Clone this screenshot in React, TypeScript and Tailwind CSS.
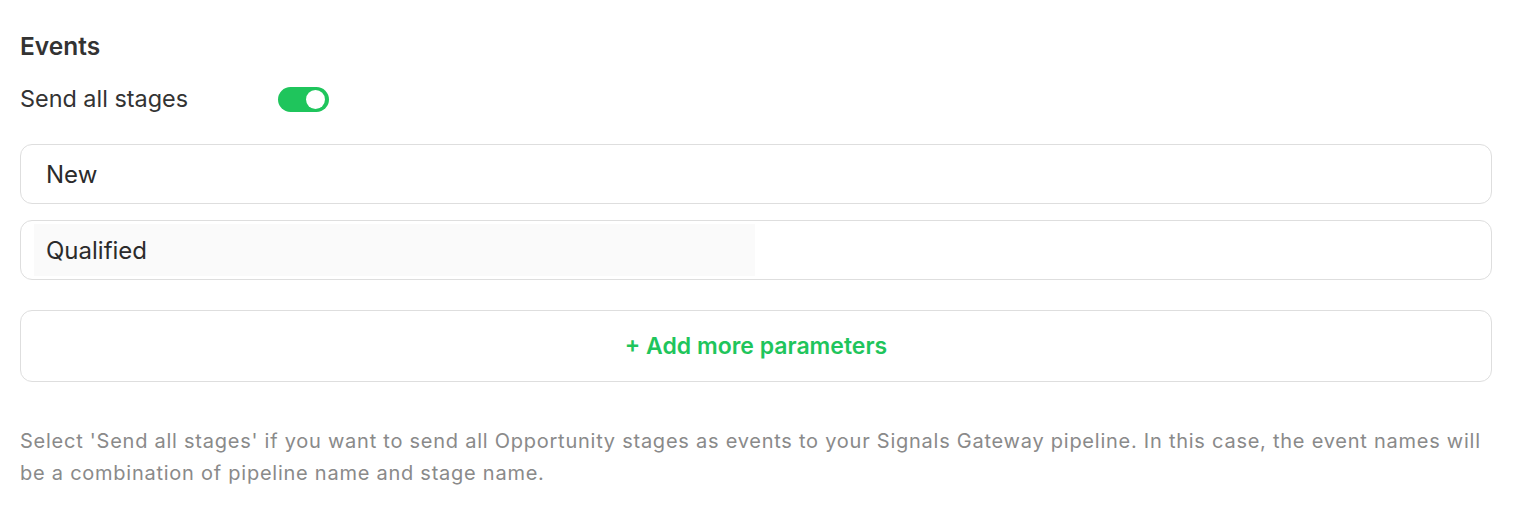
export default function App() {
  return (
    <div
      className="min-h-screen bg-white pl-5 pr-[44px] pt-[30px]"
      style={{ fontFamily: "Inter, 'Noto Sans', 'Liberation Sans', sans-serif" }}
    >
      <h2 className="text-[24.5px] font-semibold leading-8 text-[#333]">Events</h2>

      <div className="mt-6 flex h-[26px] items-center">
        <span className="w-[258px] text-[23.4px] text-[#333]">Send all stages</span>
        <button
          type="button"
          aria-pressed="true"
          className="flex h-[25px] w-[51px] items-center justify-end rounded-full bg-[#1fc55c] pr-[4px]"
        >
          <span className="h-[19px] w-[19px] rounded-full bg-white" />
        </button>
      </div>

      <div className="mt-8 flex h-[60px] items-center rounded-xl border border-[#dedede] pl-[25px] pt-[2px] text-[24px] text-[#2b2b2b]">
        New
      </div>

      <div className="mt-4 flex h-[60px] items-center rounded-xl border border-[#dedede] py-[3px] pl-[13px]">
        <div className="flex h-[52px] w-[721px] items-center bg-[#fafafa] px-3 pt-[2px] text-[24px] text-[#2b2b2b]">
          Qualified
        </div>
      </div>

      <button
        type="button"
        className="mt-[30px] flex h-[72px] w-full items-center justify-center rounded-xl border border-[#dedede] text-[23px] font-semibold text-[#1fc55c]"
      >
        + Add more parameters
      </button>

      <p className="mt-[43px] text-[20px] leading-8 tracking-[0.75px] text-[#8a8a8a]">
        Select 'Send all stages' if you want to send all Opportunity stages as events to your Signals Gateway pipeline. In this case, the event names will be a combination of pipeline name and stage name.
      </p>
    </div>
  );
}
